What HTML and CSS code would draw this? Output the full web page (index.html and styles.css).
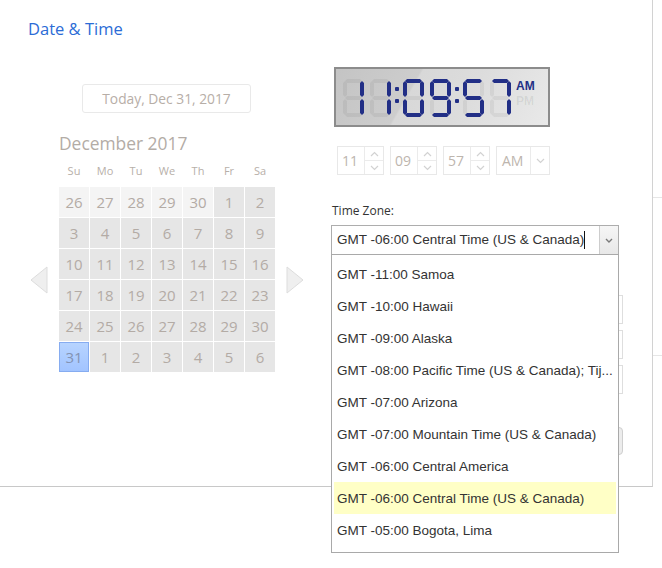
FILE: index.html
```html
<!DOCTYPE html>
<html lang="en">
<head>
<meta charset="utf-8">
<title>Date &amp; Time</title>
<link rel="stylesheet" href="styles.css">
</head>
<body>
<div class="page">
  <div class="panel">
    <h1 class="title">Date &amp; Time</h1>
    <div class="content">
      <div class="cal-col">
        <button class="today">Today, Dec 31, 2017</button>
        <div class="month">December 2017</div>
        <div class="dow"><span>Su</span><span>Mo</span><span>Tu</span><span>We</span><span>Th</span><span>Fr</span><span>Sa</span></div>
        <div class="cal-row">
          <svg class="nav" width="18" height="28" viewBox="0 0 18 28"><polygon points="17,1 17,27 1,14" fill="#efefef" stroke="#dddddd" stroke-width="1" stroke-linejoin="round"/></svg>
          <div class="grid">
            <div class="c prev">26</div><div class="c prev">27</div><div class="c prev">28</div><div class="c prev">29</div><div class="c prev">30</div><div class="c">1</div><div class="c">2</div>
            <div class="c">3</div><div class="c">4</div><div class="c">5</div><div class="c">6</div><div class="c">7</div><div class="c">8</div><div class="c">9</div>
            <div class="c">10</div><div class="c">11</div><div class="c">12</div><div class="c">13</div><div class="c">14</div><div class="c">15</div><div class="c">16</div>
            <div class="c">17</div><div class="c">18</div><div class="c">19</div><div class="c">20</div><div class="c">21</div><div class="c">22</div><div class="c">23</div>
            <div class="c">24</div><div class="c">25</div><div class="c">26</div><div class="c">27</div><div class="c">28</div><div class="c">29</div><div class="c">30</div>
            <div class="c sel">31</div><div class="c">1</div><div class="c">2</div><div class="c">3</div><div class="c">4</div><div class="c">5</div><div class="c">6</div>
          </div>
          <svg class="nav" width="18" height="28" viewBox="0 0 18 28"><polygon points="1,1 1,27 17,14" fill="#efefef" stroke="#dddddd" stroke-width="1" stroke-linejoin="round"/></svg>
        </div>
      </div>

      <div class="time-col">
        <div class="lcd" aria-label="11:09:57 AM">
          <div class="dg gap"><i class="a"></i><i class="b on"></i><i class="c2 on"></i><i class="d"></i><i class="e"></i><i class="f"></i><i class="g"></i></div>
          <div class="dg"><i class="a"></i><i class="b on"></i><i class="c2 on"></i><i class="d"></i><i class="e"></i><i class="f"></i><i class="g"></i></div>
          <div class="colon"><b></b><b></b></div>
          <div class="dg gap"><i class="a on"></i><i class="b on"></i><i class="c2 on"></i><i class="d on"></i><i class="e on"></i><i class="f on"></i><i class="g"></i></div>
          <div class="dg"><i class="a on"></i><i class="b on"></i><i class="c2 on"></i><i class="d on"></i><i class="e"></i><i class="f on"></i><i class="g on"></i></div>
          <div class="colon"><b></b><b></b></div>
          <div class="dg gap"><i class="a on"></i><i class="b"></i><i class="c2 on"></i><i class="d on"></i><i class="e"></i><i class="f on"></i><i class="g on"></i></div>
          <div class="dg"><i class="a on"></i><i class="b on"></i><i class="c2 on"></i><i class="d"></i><i class="e"></i><i class="f"></i><i class="g"></i></div>
          <div class="ampm"><span class="am">AM</span><span class="pm">PM</span></div>
        </div>

        <div class="spins">
          <div class="spin">
            <span class="val">11</span>
            <span class="arrows">
              <span class="up"><svg width="9" height="6" viewBox="0 0 9 6"><polyline points="1,5 4.5,1.5 8,5" fill="none" stroke="#d2d2d2" stroke-width="1.2"/></svg></span>
              <span class="down"><svg width="9" height="6" viewBox="0 0 9 6"><polyline points="1,1 4.5,4.5 8,1" fill="none" stroke="#d2d2d2" stroke-width="1.2"/></svg></span>
            </span>
          </div>
          <div class="spin">
            <span class="val">09</span>
            <span class="arrows">
              <span class="up"><svg width="9" height="6" viewBox="0 0 9 6"><polyline points="1,5 4.5,1.5 8,5" fill="none" stroke="#d2d2d2" stroke-width="1.2"/></svg></span>
              <span class="down"><svg width="9" height="6" viewBox="0 0 9 6"><polyline points="1,1 4.5,4.5 8,1" fill="none" stroke="#d2d2d2" stroke-width="1.2"/></svg></span>
            </span>
          </div>
          <div class="spin">
            <span class="val">57</span>
            <span class="arrows">
              <span class="up"><svg width="9" height="6" viewBox="0 0 9 6"><polyline points="1,5 4.5,1.5 8,5" fill="none" stroke="#d2d2d2" stroke-width="1.2"/></svg></span>
              <span class="down"><svg width="9" height="6" viewBox="0 0 9 6"><polyline points="1,1 4.5,4.5 8,1" fill="none" stroke="#d2d2d2" stroke-width="1.2"/></svg></span>
            </span>
          </div>
          <div class="spin ap">
            <span class="val">AM</span>
            <span class="drop"><svg width="9" height="6" viewBox="0 0 9 6"><polyline points="1,1 4.5,4.5 8,1" fill="none" stroke="#d2d2d2" stroke-width="1.2"/></svg></span>
          </div>
        </div>

        <div class="tz-label">Time Zone:</div>
        <div class="tz-select">
          <div class="tz-value"><span class="tz-text">GMT -06:00 Central Time (US &amp; Canada)</span><span class="caret"></span></div>
          <div class="tz-btn"><svg width="8" height="5" viewBox="0 0 8 5"><polyline points="1,1 4,4 7,1" fill="none" stroke="#7a7a7a" stroke-width="1.4"/></svg></div>
          <ul class="tz-list">
            <li>GMT -11:00 Samoa</li>
            <li>GMT -10:00 Hawaii</li>
            <li>GMT -09:00 Alaska</li>
            <li>GMT -08:00 Pacific Time (US &amp; Canada); Tij...</li>
            <li>GMT -07:00 Arizona</li>
            <li>GMT -07:00 Mountain Time (US &amp; Canada)</li>
            <li>GMT -06:00 Central America</li>
            <li class="hl">GMT -06:00 Central Time (US &amp; Canada)</li>
            <li>GMT -05:00 Bogota, Lima</li>
          </ul>
        </div>
        <div class="field f1"></div>
        <div class="field"></div>
        <div class="field"></div>
        <div class="ghost-btn"></div>
      </div>
    </div>
  </div>
  <div class="side"><div class="s1"></div><div class="s2"></div></div>
</div>
</body>
</html>
```
FILE: styles.css
```css
* { box-sizing: border-box; }
html, body { margin: 0; padding: 0; background: #fff; }
body { font-family: "Open Sans", "Noto Sans", sans-serif; }

.page { display: flex; width: 662px; height: 568px; overflow: hidden; }

.panel {
  width: 653px; height: 487px; flex: none;
  border-right: 1px solid #d2d2d2;
  border-bottom: 1px solid #c8c8c8;
  position: relative;
}
.side { flex: 1; }
.side .s1 { height: 198px; border-bottom: 1px solid #e6e6e6; }
.side .s2 { height: 158px; border-bottom: 1px solid #e6e6e6; }

.title {
  margin: 0; padding: 17px 0 0 28px;
  font-size: 16.5px; font-weight: normal; line-height: 24px;
  color: #2b6cd6;
}

.content { display: flex; margin-top: 26px; }

/* calendar */
.cal-col { width: 301px; margin-left: 30px; flex: none; }
.today {
  display: block; margin: 17px 0 0 52px;
  width: 169px; height: 29px;
  border: 1px solid #e9e9e9; border-radius: 3px; background: #fff;
  font-family: inherit; font-size: 13.8px; color: #b7aea7; padding: 0;
}
.month {
  margin: 18px 0 0 29px;
  font-size: 17.4px; line-height: 24px; color: #b3aca6;
}
.dow {
  margin: 8px 0 0 29px;
  display: grid; grid-template-columns: repeat(7, 30px); column-gap: 1px;
  font-size: 11px; line-height: 16px; color: #b7afa9; text-align: center;
}
.cal-row { display: flex; align-items: center; gap: 11px; margin-top: 8px; }
.nav { display: block; flex: none; }
.grid {
  display: grid; grid-template-columns: repeat(7, 30px); grid-auto-rows: 30px; gap: 1px;
}
.grid .c {
  background: #e6e6e6; color: #b3aba5;
  font-size: 15px; line-height: 30px; text-align: center;
}
.grid .c.prev { background: #f4f4f4; }
.grid .c.sel {
  background: linear-gradient(#b7d4ff, #a2c4ff);
  border: 1px solid #86acf0; line-height: 28px; color: #8393b3;
}

/* time */
.time-col { flex: none; width: 300px; }

.lcd {
  margin-left: 3px; width: 216px; height: 60px;
  border: 2px solid #8c8c8c;
  background: linear-gradient(120deg, #c4c4c4 0%, #cdcdcd 35%, #d8d8d8 36%, #dcdcdc 60%, #e9e9e9 100%);
  display: flex; align-items: flex-start;
  padding: 10px 0 0 7px;
}
.dg { position: relative; width: 21px; height: 38px; flex: none; }
.dg.gap { margin-right: 6px; }
.dg i { position: absolute; display: block; background: rgba(0,0,0,0.05); }
.dg i.on { background: #222f86; }
.dg .a, .dg .d, .dg .g {
  left: 2px; width: 17px; height: 4px;
  clip-path: polygon(2px 0, 15px 0, 17px 2px, 15px 4px, 2px 4px, 0 2px);
}
.dg .a { top: 0; }
.dg .g { top: 17px; }
.dg .d { top: 34px; }
.dg .b, .dg .c2, .dg .e, .dg .f {
  width: 4px; height: 16px;
  clip-path: polygon(2px 0, 4px 2px, 4px 14px, 2px 16px, 0 14px, 0 2px);
}
.dg .b { top: 2px; right: 0; }
.dg .c2 { top: 20px; right: 0; }
.dg .f { top: 2px; left: 0; }
.dg .e { top: 20px; left: 0; }
.colon { position: relative; width: 12px; height: 38px; flex: none; }
.colon b { position: absolute; left: 4px; width: 4px; height: 4px; background: #222f86; border-radius: 1px; }
.colon b:first-child { top: 8px; }
.colon b:last-child { top: 20px; }
.ampm {
  margin-left: 5px; display: flex; flex-direction: column;
  font-family: "Liberation Sans", Arial, sans-serif; font-weight: bold; font-size: 12px; line-height: 15px;
}
.ampm .am { color: #222f86; }
.ampm .pm { color: rgba(0,0,0,0.07); }

.spins { display: flex; gap: 6px; margin: 19px 0 0 6px; }
.spin {
  display: flex; width: 47px; height: 29px;
  border: 1px solid #e8e8e8;
}
.spin .val {
  flex: 1; padding-left: 4px;
  font-size: 14px; line-height: 27px; color: #bdb5ae;
}
.spin .arrows { width: 19px; display: flex; flex-direction: column; border-left: 1px solid #ebebeb; }
.spin .arrows span { flex: 1; display: flex; align-items: center; justify-content: center; }
.spin .arrows .down { border-top: 1px solid #ebebeb; }
.spin.ap { width: 54px; }
.spin.ap .val { padding-left: 5px; }
.spin .drop { width: 19px; border-left: 1px solid #ebebeb; display: flex; align-items: center; justify-content: center; }
.spin svg { display: block; }

.tz-label {
  margin: 28px 0 0 1px;
  font-size: 12px; line-height: 16px; color: #333;
}
.tz-select {
  position: relative; margin-top: 6px;
  width: 288px; height: 30px;
  border: 1px solid #adadad;
  display: flex;
  font-family: "Liberation Sans", Arial, sans-serif; font-size: 13.5px; color: #333;
}
.tz-value { flex: 1; padding-left: 5px; line-height: 28px; white-space: nowrap; overflow: hidden; display: flex; align-items: center; }
.caret { display: inline-block; width: 1px; height: 18px; background: #111; }
.tz-btn {
  width: 19px; border-left: 1px solid #cdcdcd;
  background: linear-gradient(#f6f6f6, #e8e8e8);
  display: flex; align-items: center; justify-content: center;
}
.tz-btn svg { display: block; }
.tz-list {
  position: absolute; z-index: 5; top: 100%; left: -1px;
  width: 288px; height: 299px;
  margin: 0; padding: 3px 2px 6px 2px; list-style: none;
  background: #fff; border: 1px solid #a9a9a9;
}
.tz-list li {
  height: 32px; line-height: 30px; padding: 2px 0 0 3px;
  white-space: nowrap;
}
.tz-list li.hl { background: #ffffc6; }

.field { width: 292px; height: 29px; margin-top: 6px; border: 1px solid #dedede; background: #fff; }
.field.f1 { margin-top: 40px; }
.ghost-btn {
  width: 292px; height: 28px; margin-top: 33px;
  border: 1px solid #cfcfcf; border-radius: 4px; background: #ececec;
}
```
